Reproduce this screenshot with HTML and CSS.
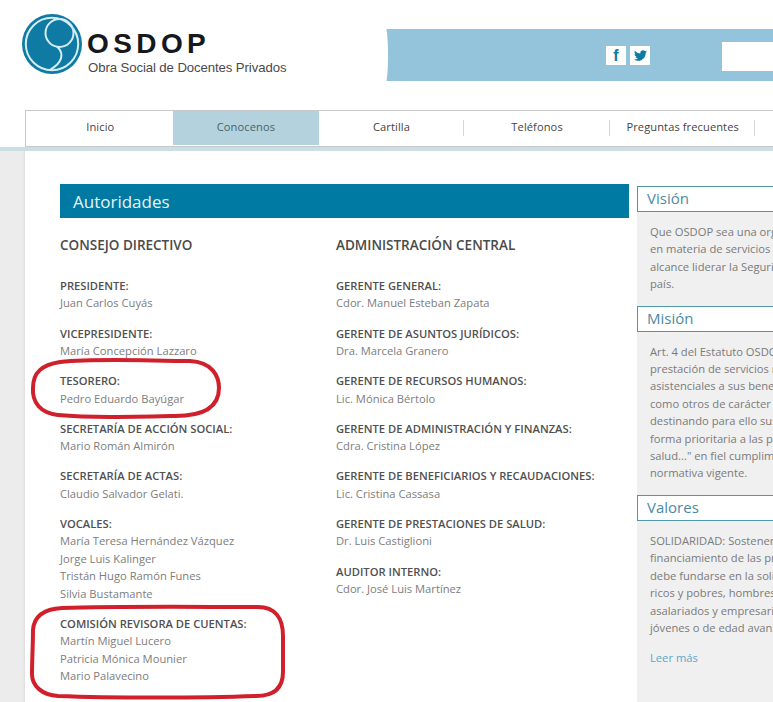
FILE: index.html
```html
<!DOCTYPE html>
<html lang="es">
<head>
<meta charset="utf-8">
<title>OSDOP - Autoridades</title>
<link rel="stylesheet" href="styles.css">
</head>
<body>
<div class="page">
  <header class="top">
    <div class="logo">
      <svg class="logo-mark" width="62" height="62" viewBox="0 0 62 62">
        <circle cx="31" cy="31" r="30" fill="#0f7aa3"/>
        <circle cx="31" cy="31" r="26.2" fill="none" stroke="#d4ecf3" stroke-width="2"/>
        <circle cx="38.5" cy="20" r="14" fill="none" stroke="#d4ecf3" stroke-width="2"/>
        <path d="M36 33.5C44 41 41 50 29 56.8" fill="none" stroke="#d4ecf3" stroke-width="2"/>
      </svg>
      <div class="logo-text">
        <div class="logo-name">OSDOP</div>
        <div class="logo-sub">Obra Social de Docentes Privados</div>
      </div>
    </div>
    <div class="band">
      <a class="social fb">f</a>
      <a class="social tw">
        <svg width="13" height="11" viewBox="0 0 24 20"><path fill="#0f7aa3" d="M23.953 2.57a10 10 0 0 1-2.825.775 4.958 4.958 0 0 0 2.163-2.723c-.951.555-2.005.959-3.127 1.184a4.92 4.92 0 0 0-8.384 4.482C7.69 6.095 4.067 4.13 1.64 1.162a4.822 4.822 0 0 0-.666 2.475c0 1.71.87 3.213 2.188 4.096a4.904 4.904 0 0 1-2.228-.616v.06a4.923 4.923 0 0 0 3.946 4.827 4.996 4.996 0 0 1-2.212.085 4.936 4.936 0 0 0 4.604 3.417 9.867 9.867 0 0 1-6.102 2.105c-.39 0-.779-.023-1.17-.067a13.995 13.995 0 0 0 7.557 2.209c9.053 0 13.998-7.496 13.998-13.985 0-.21 0-.42-.015-.63A9.935 9.935 0 0 0 24 2.59z"/></svg>
      </a>
      <div class="search"></div>
    </div>
  </header>

  <div class="navband">
    <nav class="nav">
      <a class="nav-item">Inicio</a>
      <a class="nav-item active">Conocenos</a>
      <a class="nav-item sep">Cartilla</a>
      <a class="nav-item sep">Teléfonos</a>
      <a class="nav-item sep">Preguntas frecuentes</a>
    </nav>
  </div>

  <main class="main">
    <div class="sheet">
      <section class="content">
        <h1 class="title">Autoridades</h1>
        <div class="cols">
          <div class="col col-a">
            <h2 class="col-head">CONSEJO DIRECTIVO</h2>
            <div class="group"><h3>PRESIDENTE:</h3><p>Juan Carlos Cuyás</p></div>
            <div class="group"><h3>VICEPRESIDENTE:</h3><p>María Concepción Lazzaro</p></div>
            <div class="group"><h3>TESORERO:</h3><p>Pedro Eduardo Bayúgar</p></div>
            <div class="group"><h3>SECRETARÍA DE ACCIÓN SOCIAL:</h3><p>Mario Román Almirón</p></div>
            <div class="group"><h3>SECRETARÍA DE ACTAS:</h3><p>Claudio Salvador Gelati.</p></div>
            <div class="group"><h3>VOCALES:</h3><p>María Teresa Hernández Vázquez</p><p>Jorge Luis Kalinger</p><p>Tristán Hugo Ramón Funes</p><p>Silvia Bustamante</p></div>
            <div class="group"><h3>COMISIÓN REVISORA DE CUENTAS:</h3><p>Martín Miguel Lucero</p><p>Patricia Mónica Mounier</p><p>Mario Palavecino</p></div>
          </div>
          <div class="col">
            <h2 class="col-head">ADMINISTRACIÓN CENTRAL</h2>
            <div class="group"><h3>GERENTE GENERAL:</h3><p>Cdor. Manuel Esteban Zapata</p></div>
            <div class="group"><h3>GERENTE DE ASUNTOS JURÍDICOS:</h3><p>Dra. Marcela Granero</p></div>
            <div class="group"><h3>GERENTE DE RECURSOS HUMANOS:</h3><p>Lic. Mónica Bértolo</p></div>
            <div class="group"><h3>GERENTE DE ADMINISTRACIÓN Y FINANZAS:</h3><p>Cdra. Cristina López</p></div>
            <div class="group"><h3>GERENTE DE BENEFICIARIOS Y RECAUDACIONES:</h3><p>Lic. Cristina Cassasa</p></div>
            <div class="group"><h3>GERENTE DE PRESTACIONES DE SALUD:</h3><p>Dr. Luis Castiglioni</p></div>
            <div class="group"><h3>AUDITOR INTERNO:</h3><p>Cdor. José Luis Martínez</p></div>
          </div>
        </div>
      </section>

      <aside class="side">
        <h2 class="side-head">Visión</h2>
        <div class="side-text">
          <p>Que OSDOP sea una organización</p>
          <p>en materia de servicios de salud</p>
          <p>alcance liderar la Seguridad Social</p>
          <p>país.</p>
        </div>
        <h2 class="side-head">Misión</h2>
        <div class="side-text">
          <p>Art. 4 del Estatuto OSDOP</p>
          <p>prestación de servicios médicos</p>
          <p>asistenciales a sus beneficiarios</p>
          <p>como otros de carácter social</p>
          <p>destinando para ello sus recursos</p>
          <p>forma prioritaria a las prestaciones</p>
          <p>salud..." en fiel cumplimiento de la</p>
          <p>normativa vigente.</p>
        </div>
        <h2 class="side-head">Valores</h2>
        <div class="side-text">
          <p>SOLIDARIDAD: Sostener el</p>
          <p>financiamiento de las prestaciones</p>
          <p>debe fundarse en la solidaridad</p>
          <p>ricos y pobres, hombres y mujeres</p>
          <p>asalariados y empresarios</p>
          <p>jóvenes o de edad avanzada</p>
        </div>
        <a class="more">Leer más</a>
      </aside>
    </div>
  </main>

  <svg class="marks" width="773" height="702" viewBox="0 0 773 702">
    <path d="M60 362C100 358 150 361 190 361C212 362 219 376 219 388C219 404 208 416 175 416C130 417 90 418 58 415C40 413 32 402 33 388C33 372 42 365 60 362Z"/>
    <path d="M62 608C120 606 200 607 258 607C275 607 283 618 283 636L283 672C283 688 274 696 256 696C200 698 110 698 58 696C42 695 32 686 32 674C32 660 33 645 33 630C34 616 44 609 62 608Z"/>
  </svg>
</div>
</body>
</html>
```

FILE: styles.css
```css
* { box-sizing: border-box; }
html, body { margin: 0; padding: 0; background: #fff; }
.page {
  position: relative;
  width: 773px;
  height: 702px;
  overflow: hidden;
  font-family: "Open Sans", "Liberation Sans", sans-serif;
}
h1, h2, h3, p { margin: 0; font-weight: normal; }

/* Header */
.top {
  display: flex;
  height: 110px;
  padding: 13px 0 0 21px;
}
.logo { display: flex; width: 365px; }
.logo-mark { flex: none; }
.logo-text { margin: 16px 0 0 4px; font-family: "Liberation Sans", Arial, sans-serif; }
.logo-name {
  font-size: 28px;
  line-height: 30px;
  font-weight: bold;
  letter-spacing: 4.4px;
  color: #16181b;
}
.logo-sub {
  font-size: 13.2px;
  line-height: 16px;
  margin: 1px 0 0 1px;
  color: #4a4a4a;
  letter-spacing: -0.1px;
  white-space: nowrap;
}
.band {
  position: relative;
  flex: 1;
  display: flex;
  align-items: flex-start;
  height: 52px;
  margin-top: 16px;
  padding: 17px 0 0 220px;
  background: #94c4db;
  overflow: hidden;
}
.band::before {
  content: "";
  position: absolute;
  left: -3px;
  top: -2px;
  width: 5px;
  height: 56px;
  border-radius: 50%;
  background: #fff;
}
.social {
  display: flex;
  align-items: center;
  justify-content: center;
  width: 20px;
  height: 19px;
  margin-right: 4px;
  background: #fff;
  flex: none;
}
.fb {
  font-family: "Liberation Sans", Arial, sans-serif;
  font-size: 16px;
  font-weight: bold;
  color: #0f7aa3;
}
.search {
  flex: none;
  width: 60px;
  height: 29px;
  margin: -4px 0 0 68px;
  background: #fff;
}

/* Nav */
.navband {
  padding-left: 25px;
  border-bottom: 4px solid #c9dfe6;
}
.nav {
  display: flex;
  height: 37px;
  border: 1px solid #c8c8c8;
  border-right: 0;
  background: #fff;
  padding: 0 0 1px 1.5px;
}
.nav-item {
  position: relative;
  flex: none;
  width: 145.6px;
  display: flex;
  align-items: center;
  justify-content: center;
  padding-bottom: 4px;
  font-size: 11.1px;
  color: #444;
  letter-spacing: 0.1px;
}
.nav-item.active { background: #b3d2de; color: #48626c; }
.nav-item.sep::after {
  content: "";
  position: absolute;
  right: 0;
  top: 9px;
  height: 16px;
  width: 1px;
  background: #d6d6d6;
}

/* Main */
.main {
  height: 552px;
  padding-left: 25px;
  background: #ececec;
}
.sheet {
  display: flex;
  height: 100%;
  padding: 33px 0 0 35px;
  background: #fff;
  box-shadow: -1px 0 2px #dcdcdc;
}
.content { flex: none; width: 569px; }
.title {
  height: 34px;
  padding-left: 13px;
  background: #0079a3;
  color: #e8f4f8;
  font-size: 17px;
  line-height: 35px;
}
.cols { display: flex; }
.col { flex: none; }
.col-a { width: 276px; }
.col-head {
  margin: 18px 0 23px;
  font-size: 13.5px;
  line-height: 18px;
  font-weight: 600;
  color: #4a4a4a;
  white-space: nowrap;
}
.group { margin-bottom: 12.8px; }
.group h3 {
  font-size: 11.2px;
  line-height: 17.4px;
  font-weight: 600;
  color: #505050;
  white-space: nowrap;
}
.group p {
  font-size: 11.2px;
  line-height: 17.4px;
  color: #7d7d7d;
  white-space: nowrap;
}

/* Sidebar */
.side {
  flex: 1;
  min-width: 0;
  margin: 2px 0 0 8px;
  background: #f0f0f0;
  overflow: hidden;
}
.side-head {
  height: 26px;
  padding-left: 9px;
  border: 1px solid #4f97aa;
  border-right: 0;
  background: #fff;
  color: #4d8aa0;
  font-size: 15px;
  line-height: 22px;
}
.side-text {
  padding: 11px 0 13px 13px;
  font-size: 11.2px;
  line-height: 17.4px;
  color: #7a7a7a;
  white-space: nowrap;
}
.more {
  display: block;
  margin: 0 0 0 13px;
  font-size: 11.2px;
  line-height: 17px;
  color: #5ca6c9;
}

/* Hand-drawn highlights over the content */
.marks {
  position: absolute;
  left: 0;
  top: 0;
  fill: none;
  stroke: #cf202c;
  stroke-width: 4;
}
```
